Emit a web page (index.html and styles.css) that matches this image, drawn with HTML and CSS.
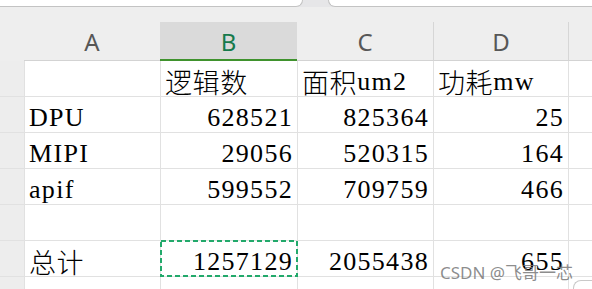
FILE: index.html
```html
<!DOCTYPE html>
<html lang="zh-CN">
<head>
<meta charset="utf-8">
<title>工作表</title>
<link rel="stylesheet" href="styles.css">
</head>
<body>
<div class="tabs">
  <div class="tab tab-left"></div>
  <div class="tab tab-right"></div>
</div>

<div class="col-heads">
  <div class="corner"></div>
  <div class="col-head col-a">A</div>
  <div class="col-head col-b is-active">B</div>
  <div class="col-head col-c">C</div>
  <div class="col-head col-d">D</div>
  <div class="col-head col-e"></div>
</div>

<div class="grid">
  <div class="row-head"></div>
  <div class="cell"></div>
  <div class="cell"><span class="cjk">逻辑数</span></div>
  <div class="cell"><span class="cjk">面积</span>um2</div>
  <div class="cell"><span class="cjk">功耗</span>mw</div>
  <div class="cell"></div>

  <div class="row-head"></div>
  <div class="cell">DPU</div>
  <div class="cell num">628521</div>
  <div class="cell num">825364</div>
  <div class="cell num">25</div>
  <div class="cell"></div>

  <div class="row-head"></div>
  <div class="cell">MIPI</div>
  <div class="cell num">29056</div>
  <div class="cell num">520315</div>
  <div class="cell num">164</div>
  <div class="cell"></div>

  <div class="row-head"></div>
  <div class="cell">apif</div>
  <div class="cell num">599552</div>
  <div class="cell num">709759</div>
  <div class="cell num">466</div>
  <div class="cell"></div>

  <div class="row-head"></div>
  <div class="cell"></div>
  <div class="cell"></div>
  <div class="cell"></div>
  <div class="cell"></div>
  <div class="cell"></div>

  <div class="row-head"></div>
  <div class="cell"><span class="cjk">总计</span></div>
  <div class="cell num is-copied">1257129
    <svg class="marquee" width="138" height="37" viewBox="0 0 138 37" aria-hidden="true">
      <rect x="1" y="1" width="136" height="35" fill="none" stroke="#22a96b" stroke-width="2" stroke-dasharray="5 3"/>
    </svg>
  </div>
  <div class="cell num">2055438</div>
  <div class="cell num">655</div>
  <div class="cell"></div>

  <div class="row-head"></div>
  <div class="cell"></div>
  <div class="cell"></div>
  <div class="cell"></div>
  <div class="cell"></div>
  <div class="cell"></div>
</div>

<div class="watermark">CSDN @飞哥一芯</div>
<div class="float-btn"></div>
</body>
</html>
```

FILE: styles.css
```css
html, body {
  margin: 0;
  padding: 0;
}

body {
  width: 592px;
  height: 289px;
  overflow: hidden;
  position: relative;
  background: #eeeeee;
}

/* document tabs along the top edge */
.tabs {
  display: flex;
  height: 7px;
  background: #e6e6e8;
}

.tab {
  box-sizing: border-box;
  height: 7px;
  background: #ffffff;
  border-bottom: 1px solid #c3c3c3;
}

.tab-left {
  width: 323px;
  margin-left: -20px;
  border-right: 1px solid #c3c3c3;
  border-radius: 0 0 9px 0;
}

.tab-right {
  flex: 1;
  margin-left: 25px;
  margin-right: -20px;
  border-left: 1px solid #c3c3c3;
  border-radius: 0 0 0 9px;
}

/* column letters */
.col-heads {
  display: flex;
  margin-top: 15px;
  height: 39px;
}

.corner {
  width: 24px;
  flex: none;
}

.col-head {
  box-sizing: border-box;
  flex: none;
  height: 39px;
  padding-top: 1px;
  border-bottom: 1px solid #d3d3d3;
  display: flex;
  align-items: center;
  justify-content: center;
  font-family: "Noto Sans", "Liberation Sans", sans-serif;
  font-size: 24px;
  color: #575757;
}

.col-a { width: 136px; }
.col-b { width: 137px; }
.col-c { width: 137px; border-right: 1px solid #d6d6d6; }
.col-d { width: 135px; border-right: 1px solid #d6d6d6; }
.col-e { flex: 1; }

.col-head.is-active {
  background: #dadada;
  color: #167a4c;
  border-bottom: 2px solid #3f922d;
}

/* cell grid: the 1px gaps show the gridline colour; the last row is cut by the window */
.grid {
  display: grid;
  grid-template-columns: 24px 135px 136px 135px 134px 1fr;
  grid-template-rows: repeat(6, 35px) 12px;
  gap: 1px;
  background: #e1e1e1;
}

.row-head {
  background: #ededed;
}

.cell {
  background: #ffffff;
  padding: 0 4px;
  font-family: "Liberation Serif", "Noto Sans CJK SC", serif;
  font-size: 26px;
  letter-spacing: 1.3px;
  line-height: 28px;
  color: #000000;
  display: flex;
  align-items: flex-end;
  white-space: nowrap;
}

.cjk {
  font-family: "Noto Sans CJK SC", sans-serif;
  font-size: 27px;
  letter-spacing: 0.6px;
  font-weight: 300;
}

.num {
  justify-content: flex-end;
}

.is-copied {
  position: relative;
}

/* dashed copy marquee around the selected cell */
.marquee {
  position: absolute;
  left: -1px;
  top: -1px;
}

.watermark {
  position: absolute;
  left: 440px;
  top: 259px;
  font-family: "Noto Sans", "Noto Sans CJK SC", sans-serif;
  font-size: 17px;
  color: rgba(120, 120, 120, 0.85);
  white-space: nowrap;
}

/* corner of a floating button peeking in at the bottom right */
.float-btn {
  position: absolute;
  left: 573px;
  top: 280px;
  width: 19px;
  height: 9px;
  box-sizing: border-box;
  border-top: 1px solid #c9c9c9;
  border-left: 1px solid #c9c9c9;
  border-radius: 8px 0 0 0;
  background: #ffffff;
}
```
